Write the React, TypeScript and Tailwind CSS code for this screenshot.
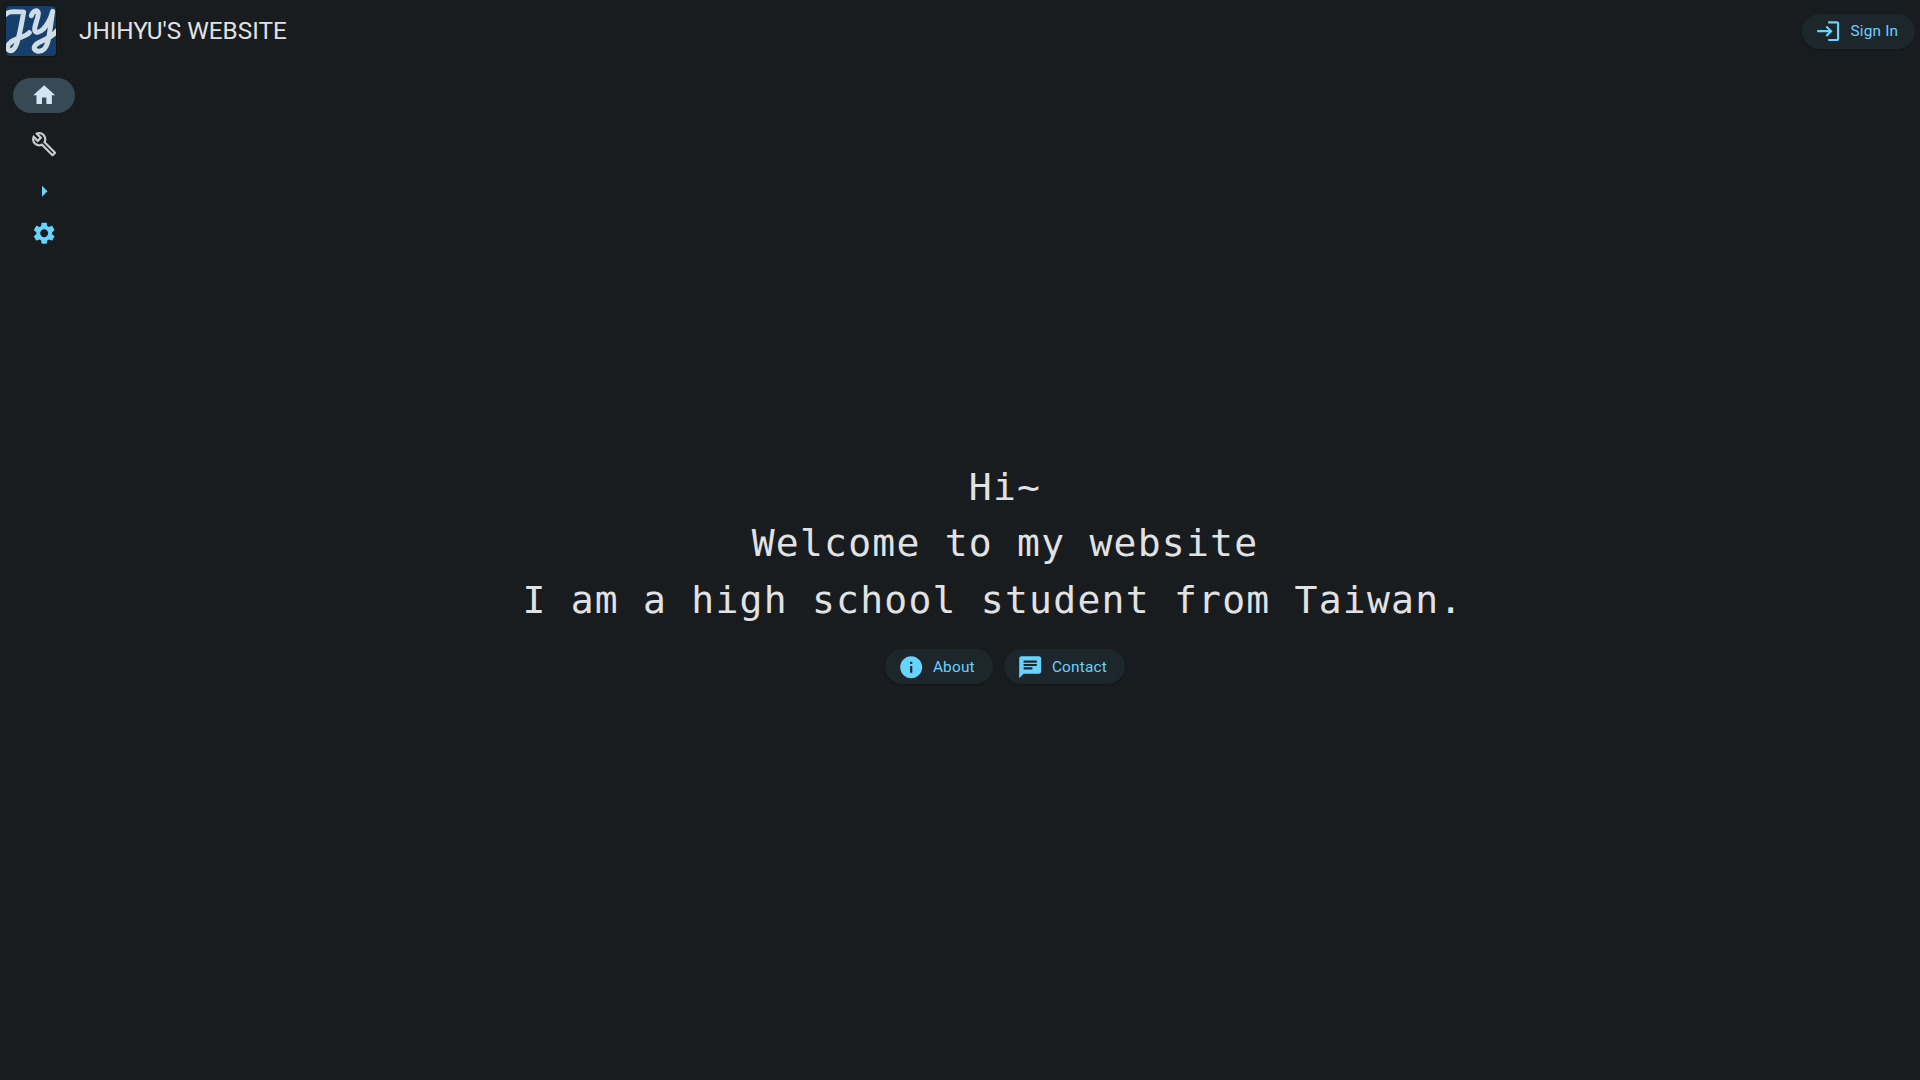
import type { ReactNode } from "react";
import { MdArrowRight, MdChat, MdHome, MdInfo, MdLogin, MdOutlineBuild, MdSettings } from "react-icons/md";

function Logo() {
  return (
    <svg viewBox="18 18 150 150" className="size-[50px] shrink-0 rounded-[4px] bg-[#173f6b] shadow-[0_0_0_1px_#15170f]">
      <g fill="none" stroke="#cfdee6" strokeWidth="15" strokeLinecap="round" strokeLinejoin="round">
        <path d="M17 43C28 33 42 35 71 36C66 62 61 98 51 128C45 149 34 156 26 150C16 138 32 123 52 116C70 109 80 107 88 98" />
        <path d="M94 47C99 31 116 27 115 41C114 58 104 73 104 88C104 101 119 98 130 87C144 72 153 53 158 34C153 65 150 98 144 123C139 145 127 156 112 153C98 149 100 136 116 128C138 117 158 111 170 93" />
      </g>
    </svg>
  );
}

function PillButton({ icon, label, className }: { icon: ReactNode; label: string; className: string }) {
  return (
    <button
      className={`flex h-[35px] items-center rounded-full bg-[#1d262b] pl-[13px] text-[15.4px] font-normal leading-none tracking-[0.18px] text-[#67d3ff] shadow-[0_1px_2px_rgba(0,0,0,0.25)] ${className}`}
    >
      {icon}
      <span className="ml-[9px] whitespace-nowrap pt-[2px]">{label}</span>
    </button>
  );
}

export default function App() {
  return (
    <div className="flex h-screen flex-col overflow-hidden bg-[#191c1e] font-[Roboto,sans-serif] text-[#e1e2e4]">
      <header className="flex h-[61px] shrink-0 items-center pl-[6px] pr-[5px] pt-px">
        <Logo />
        <h1 className="ml-[23px] text-[24.3px] leading-none">JHIHYU'S WEBSITE</h1>
        <PillButton className="ml-auto w-[113px]" icon={<MdLogin className="size-[26.4px] shrink-0" />} label="Sign In" />
      </header>
      <div className="flex min-h-0 flex-1">
        <nav className="flex w-[88px] shrink-0 flex-col items-center pt-[16.5px] text-[#67d3ff]">
          <a className="flex h-[35px] w-[62px] items-center justify-center rounded-full bg-[#364954] text-[#d1e6f4]">
            <MdHome className="size-[26.4px]" />
          </a>
          <a className="mt-[14px] flex h-[35px] w-[62px] items-center justify-center text-[#c8cacc]">
            <MdOutlineBuild className="size-[26.4px]" />
          </a>
          <a className="mt-[17px] flex h-[26px] items-center">
            <MdArrowRight className="size-[26.4px]" />
          </a>
          <a className="mt-[16px] flex h-[26px] items-center">
            <MdSettings className="size-[26.4px]" />
          </a>
        </nav>
        <main className="flex flex-1 flex-col items-center pt-[398px]">
          <div className="whitespace-pre pl-[2px] text-center font-['DejaVu_Sans_Mono',monospace] text-[38px] leading-[56.4px] tracking-[1.25px]">
            <p>Hi~</p>
            <p>Welcome to my website</p>
            <p>{"I am a high school student from Taiwan. "}</p>
          </div>
          <div className="mt-[21px] flex gap-[11px] pl-px">
            <PillButton className="w-[108px]" icon={<MdInfo className="size-[26.4px] shrink-0" />} label="About" />
            <PillButton className="w-[121px]" icon={<MdChat className="size-[26.4px] shrink-0" />} label="Contact" />
          </div>
        </main>
      </div>
    </div>
  );
}
